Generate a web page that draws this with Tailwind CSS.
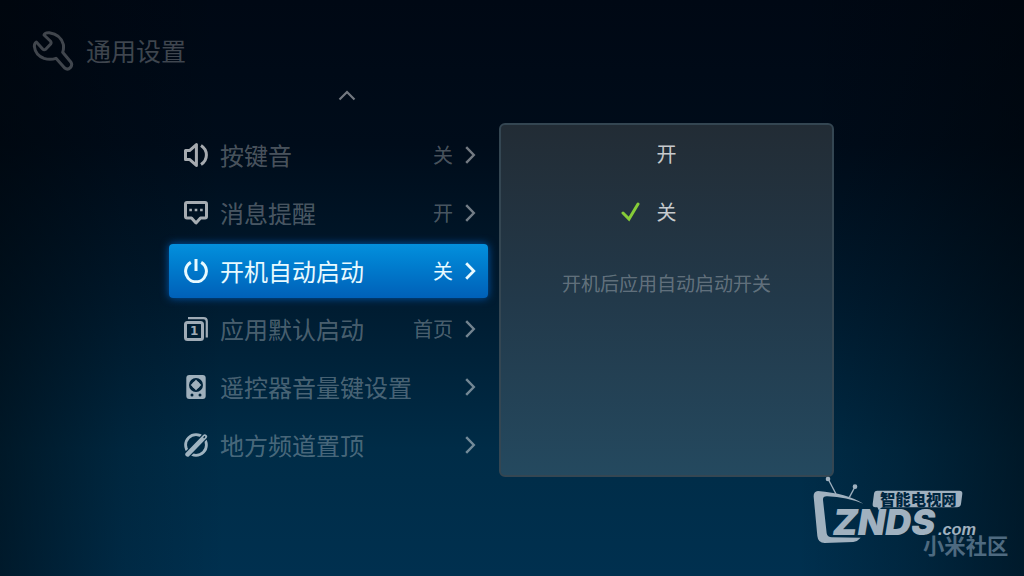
<!DOCTYPE html>
<html lang="zh-CN">
<head>
    <meta charset="UTF-8">
    <meta name="viewport" content="width=device-width, initial-scale=1.0">
    <title>通用设置</title>
    <script src="https://cdn.jsdelivr.net/npm/@tailwindcss/browser@4"></script>
</head>
<body class="bg-[#000814] font-['Noto_Sans_CJK_SC',sans-serif]">
    <div class="relative min-h-screen overflow-hidden bg-[linear-gradient(to_right,rgb(0_4_8/0.5),rgb(0_4_8/0.15)_12%,transparent_22%,transparent_78%,rgb(0_4_8/0.2)_88%,rgb(0_4_8/0.5)),linear-gradient(to_bottom,#000814,#000c1a_25%,#001a2e_50%,#002c47_78%,#00304f)]">
        <header class="flex items-center gap-3 px-8 pt-7 text-white/25">
            <svg class="size-[42px]" viewBox="36 30 126 126" fill="none" stroke="currentColor" stroke-width="9" stroke-linejoin="round" stroke-linecap="round">
                <path d="M72 48 Q74 40 88 41 Q122 46 130 76 Q132 90 128 100 L153 130 Q158 138 151 146 Q143 154 134 147 L108 118 Q90 124 72 118 Q46 108 43 82 Q43 72 49 69 L68 90 Q72 94 77 91 L92 75 Q95 71 91 66 Z"/>
            </svg>
            <h1 class="text-[25px] leading-[44px]">通用设置</h1>
        </header>

        <main class="grid grid-cols-[319fr_335fr] gap-x-[11px] pr-[190px] pl-[169px]">
            <div class="flex h-[51px] justify-center pt-4 pl-9">
                <button type="button" aria-label="向上" class="h-4 w-5 text-white/45">
                    <svg class="h-4 w-5" viewBox="0 0 20 16" fill="none" stroke="currentColor" stroke-width="2.2">
                        <path d="M2.5 11.5 L10 4 L17.5 11.5"/>
                    </svg>
                </button>
            </div>

            <nav class="col-start-1 row-start-2 flex flex-col gap-1 pt-[5px] text-2xl text-white/30">
                <button type="button" class="flex h-[54px] w-full items-center gap-3 rounded px-[15px] pr-3">
                    <svg class="size-6 shrink-0 text-white/65" viewBox="0 0 24 24" fill="none" stroke="currentColor" stroke-width="3" stroke-linejoin="round">
                        <path d="M1.5 7.6 H5.5 L12.4 1.6 V22.4 L5.5 16.4 H1.5 Z"/>
                        <path d="M17 2.5 Q22.4 6 22.4 12 Q22.4 18 17 21.5"/>
                    </svg>
                    <span class="flex-1 text-left">按键音</span>
                    <span class="text-xl">关</span>
                    <svg class="h-[18px] w-[11px] shrink-0 text-white/45" viewBox="0 0 11 18" fill="none" stroke="currentColor" stroke-width="2.4"><path d="M1.2 1.2 L8.8 9 L1.2 16.8"/></svg>
                </button>
                <button type="button" class="flex h-[54px] w-full items-center gap-3 rounded px-[15px] pr-3">
                    <svg class="size-6 shrink-0 text-white/65" viewBox="0 0 24 24" fill="none" stroke="currentColor" stroke-width="3" stroke-linejoin="round">
                        <path d="M3 1.5 H21 Q22.5 1.5 22.5 3 V15.5 Q22.5 17 21 17 H16.5 L12 22 L7.5 17 H3 Q1.5 17 1.5 15.5 V3 Q1.5 1.5 3 1.5 Z"/>
                        <path d="M5.3 9 H7.9 M10.7 9 H13.3 M16.1 9 H18.7" stroke-width="2.6"/>
                    </svg>
                    <span class="flex-1 text-left">消息提醒</span>
                    <span class="text-xl">开</span>
                    <svg class="h-[18px] w-[11px] shrink-0 text-white/45" viewBox="0 0 11 18" fill="none" stroke="currentColor" stroke-width="2.4"><path d="M1.2 1.2 L8.8 9 L1.2 16.8"/></svg>
                </button>
                <button type="button" aria-current="true" class="flex h-[54px] w-full items-center gap-3 rounded bg-linear-to-b from-[#0490dd] to-[#0060b8] px-[15px] pr-3 text-[#e8faff] shadow-[0_0_8px_#0058b0]">
                    <svg class="size-6 shrink-0" viewBox="0 0 24 24" fill="none" stroke="currentColor" stroke-width="3">
                        <path d="M6.8 3.4 A10.4 10.4 0 1 0 17.2 3.4"/>
                        <path d="M12 0 V12"/>
                    </svg>
                    <span class="flex-1 text-left">开机自动启动</span>
                    <span class="text-xl">关</span>
                    <svg class="h-[18px] w-[11px] shrink-0" viewBox="0 0 11 18" fill="none" stroke="currentColor" stroke-width="2.8"><path d="M1.2 1.2 L8.8 9 L1.2 16.8"/></svg>
                </button>
                <button type="button" class="flex h-[54px] w-full items-center gap-3 rounded px-[15px] pr-3">
                    <svg class="size-6 shrink-0 text-[#9fabb6]" viewBox="0 0 24 24" fill="none" stroke="currentColor" stroke-width="3">
                        <rect x="1.5" y="5.5" width="17" height="17" rx="2"/>
                        <path d="M4 1.2 H19.5 Q22.8 1.2 22.8 4.5 V20.5" stroke-width="2.2"/>
                        <text x="6" y="18.4" class="font-['DejaVu_Sans']" font-size="12" font-weight="700" fill="currentColor" stroke="none">1</text>
                    </svg>
                    <span class="flex-1 text-left">应用默认启动</span>
                    <span class="text-xl">首页</span>
                    <svg class="h-[18px] w-[11px] shrink-0 text-white/45" viewBox="0 0 11 18" fill="none" stroke="currentColor" stroke-width="2.4"><path d="M1.2 1.2 L8.8 9 L1.2 16.8"/></svg>
                </button>
                <button type="button" class="flex h-[54px] w-full items-center gap-3 rounded px-[15px] pr-3">
                    <svg class="size-6 shrink-0" viewBox="0 0 24 24">
                        <rect x="2.3" width="19.4" height="24" rx="3" fill="#9fb0bc"/>
                        <circle cx="12" cy="10" r="7" fill="#00233a"/>
                        <circle cx="12" cy="10" r="3.8" fill="#9fb0bc"/>
                        <path d="M12 4.6 L14 7 H10 Z M12 15.4 L14 13 H10 Z M6.6 10 L9 8 V12 Z M17.4 10 L15 8 V12 Z" fill="#9fb0bc"/>
                        <circle cx="8" cy="20" r="1.5" fill="#00233a"/>
                        <circle cx="16" cy="20" r="1.5" fill="#00233a"/>
                    </svg>
                    <span class="flex-1 text-left">遥控器音量键设置</span>
                    <svg class="h-[18px] w-[11px] shrink-0 text-white/45" viewBox="0 0 11 18" fill="none" stroke="currentColor" stroke-width="2.4"><path d="M1.2 1.2 L8.8 9 L1.2 16.8"/></svg>
                </button>
                <button type="button" class="flex h-[54px] w-full items-center gap-3 rounded px-[15px] pr-3">
                    <svg class="size-6 shrink-0" viewBox="0 0 24 24" fill="none" stroke-linecap="round">
                        <circle cx="12" cy="12" r="10.4" stroke="#9fb3c0" stroke-width="2.8"/>
                        <path d="M4 21 L21 3.4" stroke="#002b45" stroke-width="7"/>
                        <path d="M3.6 21.4 L20.8 3.6" stroke="#9fb3c0" stroke-width="4.6"/>
                        <path d="M20 4.4 L20.6 3.8" stroke="#002b45" stroke-width="1.4"/>
                    </svg>
                    <span class="flex-1 text-left">地方频道置顶</span>
                    <svg class="h-[18px] w-[11px] shrink-0 text-white/45" viewBox="0 0 11 18" fill="none" stroke="currentColor" stroke-width="2.4"><path d="M1.2 1.2 L8.8 9 L1.2 16.8"/></svg>
                </button>
            </nav>

            <div role="radiogroup" aria-label="开机自动启动" class="col-start-2 row-start-2 min-h-[354px] rounded-md border-2 border-[#344652] bg-linear-to-b from-[#222c35] via-[#22394a] to-[#24495f] text-xl text-white/75">
                <label class="flex h-[58px] items-center justify-center gap-4">
                    <input type="radio" name="autostart" class="peer size-0 appearance-none">
                    <svg class="invisible size-5 peer-checked:visible" viewBox="0 0 20 20" fill="none" stroke="#86cc38" stroke-width="3" stroke-linecap="round"><path d="M2 11 L8 17 L17 2"/></svg>
                    <span class="mr-[52px]">开</span>
                </label>
                <label class="flex h-[58px] items-center justify-center gap-4">
                    <input type="radio" name="autostart" class="peer size-0 appearance-none" checked>
                    <svg class="invisible size-5 peer-checked:visible" viewBox="0 0 20 20" fill="none" stroke="#86cc38" stroke-width="3" stroke-linecap="round"><path d="M2 11 L8 17 L17 2"/></svg>
                    <span class="mr-[52px]">关</span>
                </label>
                <p class="pt-7 text-center text-[19px] leading-7 text-white/30">开机后应用自动启动开关</p>
            </div>
        </main>

        <!-- watermark -->
        <svg class="absolute right-0 bottom-0 h-[116px] w-[224px]" viewBox="0 0 672 348" fill="#a0b1bf">
            <path d="M54 93 Q40 94 41 110 L52 228 Q54 249 74 249 L160 246 Q174 243 182 233 L96 232 Q82 232 80 220 L69 120 Q68 108 82 109 Q140 112 190 131 Q140 100 54 93 Z"/>
            <g stroke="#a0b1bf" stroke-width="4">
                <circle cx="84" cy="57" r="5"/>
                <path d="M86 60 L108 102"/>
                <circle cx="165" cy="80" r="5"/>
                <path d="M163 84 L148 112"/>
            </g>
            <path d="M232 92 H478 Q488 92 487 101 L483 132 Q481 142 471 142 H246 L236 150 L232 142 H226 Q217 142 218 132 L222 101 Q223 92 232 92 Z"/>
            <text x="240" y="134" class="font-['Noto_Sans_CJK_SC',sans-serif]" font-size="46" font-weight="900" fill="#00263f">智能电视网</text>
            <text x="98" y="225" class="font-['Inter',sans-serif]" font-size="108" font-weight="900" font-style="italic">ZNDS</text>
            <text x="414" y="224" class="font-['Liberation_Sans',sans-serif]" font-size="49" font-weight="700" font-style="italic">.com</text>
            <text x="369" y="281" class="font-['Noto_Sans_CJK_SC',sans-serif]" font-size="64" font-weight="700" fill="#4e6a80">小米社区</text>
        </svg>
    </div>
</body>
</html>
